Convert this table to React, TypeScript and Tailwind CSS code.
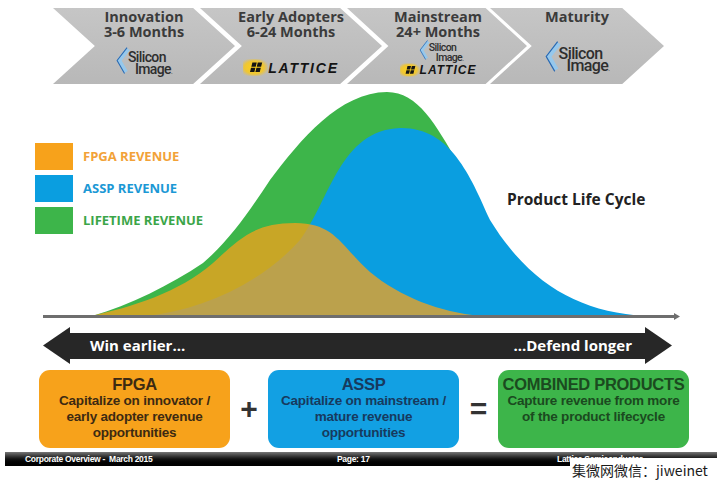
import React from 'react'

type LogoSize = 'sm' | 'md' | 'lg'

const siStyles: Record<LogoSize, { svg: string; text: string; image: string }> = {
  sm: { svg: 'w-[11px] h-[20px]', text: 'text-[10.5px] leading-[9.5px] pt-[3px] -ml-[1px]', image: 'pl-[7px]' },
  md: { svg: 'w-[14px] h-[27px]', text: 'text-[14px] leading-[11.5px] pt-[5px] -ml-[2px]', image: 'pl-[7px]' },
  lg: { svg: 'w-[16px] h-[31px]', text: 'text-[16px] leading-[12.5px] pt-[7px] -ml-[2px]', image: 'pl-[8px]' },
}

function SiliconImage({ size }: { size: LogoSize }) {
  const s = siStyles[size]
  return (
    <div className="flex items-start">
      <svg viewBox="0 0 14 28" className={s.svg}>
        <path d="M12.3 2 L3 14 L10 26" fill="none" stroke="#96c8ec" strokeWidth="4.4" strokeLinejoin="miter" />
        <path d="M11.2 0.6 L0.9 14 L8.6 27.4" fill="none" stroke="#2c69b0" strokeWidth="1.1" />
      </svg>
      <div
        className={`flex flex-col font-medium tracking-[-0.6px] text-[#2e2e2e] ${s.text}`}
        style={{ fontFamily: 'Roboto, sans-serif' }}
      >
        <span>Silicon</span>
        <span className={s.image}>
          Image<span className="text-[6px]">.</span>
        </span>
      </div>
    </div>
  )
}

function Lattice({ id, small }: { id: string; small?: boolean }) {
  return (
    <div className="flex items-center">
      <svg viewBox="0 0 24 16" className={small ? 'w-[20px] h-[14px]' : 'w-[25px] h-[17px]'}>
        <defs>
          <radialGradient id={id} cx="0.45" cy="0.5" r="0.6">
            <stop offset="0" stopColor="#ffd21a" />
            <stop offset="0.65" stopColor="#f7c81e" stopOpacity="0.85" />
            <stop offset="1" stopColor="#f2c230" stopOpacity="0" />
          </radialGradient>
        </defs>
        <rect x="0" y="0" width="24" height="16" fill={`url(#${id})`} />
        <path d="M9 3.2 H13.2 L12.2 7.3 H8 Z M14.2 3.2 H18.4 L17.4 7.3 H13.2 Z M7.7 8.3 H11.9 L10.9 12.4 H6.7 Z M12.9 8.3 H17.1 L16.1 12.4 H11.9 Z" fill="#141414" />
      </svg>
      <span
        className={`font-bold italic text-[#141414] ${small ? 'text-[12px] tracking-[1px]' : 'text-[14px] tracking-[1.8px]'} leading-none`}
        style={{ fontFamily: '"Liberation Sans", Arial, sans-serif' }}
      >
        LATTICE
      </span>
    </div>
  )
}

const chevronTitle = 'text-[14.5px] leading-[14.5px] font-bold text-[#3b3b3b] text-center whitespace-nowrap'

function Chevron({ children, className }: { children: React.ReactNode; className: string }) {
  return (
    <div
      className={`h-[76px] shrink-0 bg-linear-to-b from-[#c6c6c6] to-[#b8b8b8] flex flex-col items-center pt-[2px] ${className}`}
    >
      {children}
    </div>
  )
}

const legend = [
  { label: 'FPGA REVENUE', box: 'bg-[#f7a21b]', text: 'text-[#f2a238]' },
  { label: 'ASSP REVENUE', box: 'bg-[#0a9ee0]', text: 'text-[#1b98d5]' },
  { label: 'LIFETIME REVENUE', box: 'bg-[#3db54a]', text: 'text-[#3ba548]' },
]

const boxes = [
  {
    title: 'FPGA',
    lines: ['Capitalize on innovator /', 'early adopter revenue', 'opportunities'],
    bg: 'bg-[#f7a21b]',
    fg: 'text-[#3d2a12]',
  },
  {
    title: 'ASSP',
    lines: ['Capitalize on mainstream /', 'mature revenue', 'opportunities'],
    bg: 'bg-[#12a0e3]',
    fg: 'text-[#173a5e]',
  },
  {
    title: 'COMBINED PRODUCTS',
    lines: ['Capture revenue from more', 'of the product lifecycle'],
    bg: 'bg-[#3db54a]',
    fg: 'text-[#1b4a1f]',
  },
]

function RevenueBox({ item }: { item: (typeof boxes)[number] }) {
  return (
    <div className={`w-[191px] h-[78px] rounded-[11px] ${item.bg} ${item.fg} flex flex-col items-center pt-[5px]`}>
      <div className="text-[16.5px] leading-[18px] font-bold tracking-[-0.3px]">{item.title}</div>
      {item.lines.map((line) => (
        <div key={line} className="text-[13.5px] leading-[16px] font-bold tracking-[-0.2px] whitespace-nowrap">
          {line}
        </div>
      ))}
    </div>
  )
}

export default function App() {
  const open = { fontFamily: '"Open Sans", "Noto Sans", sans-serif' }
  const arial = { fontFamily: '"Liberation Sans", Arial, sans-serif' }

  return (
    <div className="relative w-[717px] h-[485px] bg-white overflow-hidden flex flex-col">
      {/* Stage chevrons */}
      <div className="flex pl-[53px] pt-[8px]" style={open}>
        <Chevron className="w-[182px] pl-[42px] pr-[42px] [clip-path:polygon(0_0,77%_0,100%_50%,77%_100%,0_100%,23%_50%)]">
          <div className={chevronTitle}>Innovation</div>
          <div className={chevronTitle}>3-6 Months</div>
          <div className="mt-[8px]">
            <SiliconImage size="md" />
          </div>
        </Chevron>
        <Chevron className="w-[182px] -ml-[35px] pl-[42px] pr-[42px] [clip-path:polygon(0_0,77%_0,100%_50%,77%_100%,0_100%,23%_50%)]">
          <div className={chevronTitle}>Early Adopters</div>
          <div className={chevronTitle}>6-24 Months</div>
          <div className="mt-[20px]">
            <Lattice id="lat-a" />
          </div>
        </Chevron>
        <Chevron className="w-[180px] -ml-[35px] pl-[42px] pr-[40px] [clip-path:polygon(0_0,77%_0,100%_50%,77%_100%,0_100%,23%_50%)]">
          <div className={chevronTitle}>Mainstream</div>
          <div className={chevronTitle}>24+ Months</div>
          <div className="mt-[1px] ml-[6px]">
            <SiliconImage size="sm" />
          </div>
          <div className="mt-[0px]">
            <Lattice id="lat-b" small />
          </div>
        </Chevron>
        <Chevron className="w-[174px] -ml-[37px] pl-[42px] pr-[42px] [clip-path:polygon(0_0,76%_0,100%_50%,76%_100%,0_100%,24%_50%)]">
          <div className={chevronTitle}>Maturity</div>
          <div className="mt-[16px]">
            <SiliconImage size="lg" />
          </div>
        </Chevron>
      </div>

      {/* Product life cycle chart */}
      <div className="relative h-[238px] flex items-start" style={open}>
        <svg className="absolute inset-0" width="717" height="238" viewBox="0 84 717 238">
          <path
            d="M92,316 C130,305 170,285 203,263 C230,240 250,210 270,180 C300,140 340,92 387,92 C418,92 436,125 458,163 C480,205 500,260 530,316 Z"
            fill="#3db54a"
          />
          <path
            d="M147,316 C200,310 260,285 300,240 C330,200 340,130 400,128 C450,127 470,175 490,220 C530,285 580,312 645,316 Z"
            fill="#0a9ee0"
          />
          <path
            d="M90,316 C130,308 180,292 213,263 C240,238 255,223 295,223 C335,223 340,245 370,272 C400,297 440,312 480,316 Z"
            fill="#f7a21b"
            fillOpacity="0.75"
          />
          <line x1="43" y1="316.5" x2="675" y2="316.5" stroke="#6e6e6e" strokeWidth="3" />
          <path d="M674,313 L680,316.5 L674,320 Z" fill="#6e6e6e" />
        </svg>

        <div className="relative w-[190px] ml-[35px] mt-[59px] flex flex-col gap-[5px]">
          {legend.map((l) => (
            <div key={l.label} className="flex items-center">
              <div className={`w-[38px] h-[27px] ${l.box}`} />
              <span className={`ml-[10px] text-[13px] font-bold whitespace-nowrap ${l.text}`}>{l.label}</span>
            </div>
          ))}
        </div>

        <div className="relative ml-[282px] mt-[104px] text-[15.5px] font-bold text-[#222] whitespace-nowrap">
          Product Life Cycle
        </div>
      </div>

      {/* Double arrow */}
      <div className="mt-[5px] pl-[43px] h-[37px] flex items-center" style={open}>
        <div className="w-[27px] h-[37px] bg-[#272727] [clip-path:polygon(100%_0,100%_100%,0_50%)]" />
        <div className="w-[575px] h-[26px] bg-[#272727] flex items-center justify-between pl-[20px] pr-[13px] text-white text-[15px] font-bold">
          <span>Win earlier...</span>
          <span>...Defend longer</span>
        </div>
        <div className="w-[27px] h-[37px] bg-[#272727] [clip-path:polygon(0_0,100%_50%,0_100%)]" />
      </div>

      {/* Revenue boxes */}
      <div className="mt-[6px] pl-[39px] flex items-center" style={arial}>
        <RevenueBox item={boxes[0]} />
        <div className="w-[38px] text-center text-[30px] font-bold text-[#333] leading-none">+</div>
        <RevenueBox item={boxes[1]} />
        <div className="w-[39px] text-center text-[30px] font-bold text-[#333] leading-none">=</div>
        <RevenueBox item={boxes[2]} />
      </div>

      {/* Footer */}
      <div
        className="mt-[4px] ml-[5px] h-[14px] bg-linear-to-b from-[#777777] via-[#121212] to-black flex items-center text-white text-[8.5px] font-bold tracking-[-0.3px] whitespace-pre"
        style={arial}
      >
        <span className="w-[332px] pl-[20px]">Corporate Overview -  March 2015</span>
        <span className="w-[220px]">Page: 17</span>
        <span>Lattice Semiconductor</span>
      </div>

      {/* Watermark */}
      <div
        className="absolute right-0 bottom-0 w-[147px] h-[27px] bg-white pl-[2px] pt-[1px] text-[14px] leading-[22px] text-[#1a1a1a] whitespace-nowrap"
        style={{ fontFamily: '"Noto Sans CJK SC", "Noto Sans", sans-serif' }}
      >
        集微网微信：jiweinet
      </div>
    </div>
  )
}
